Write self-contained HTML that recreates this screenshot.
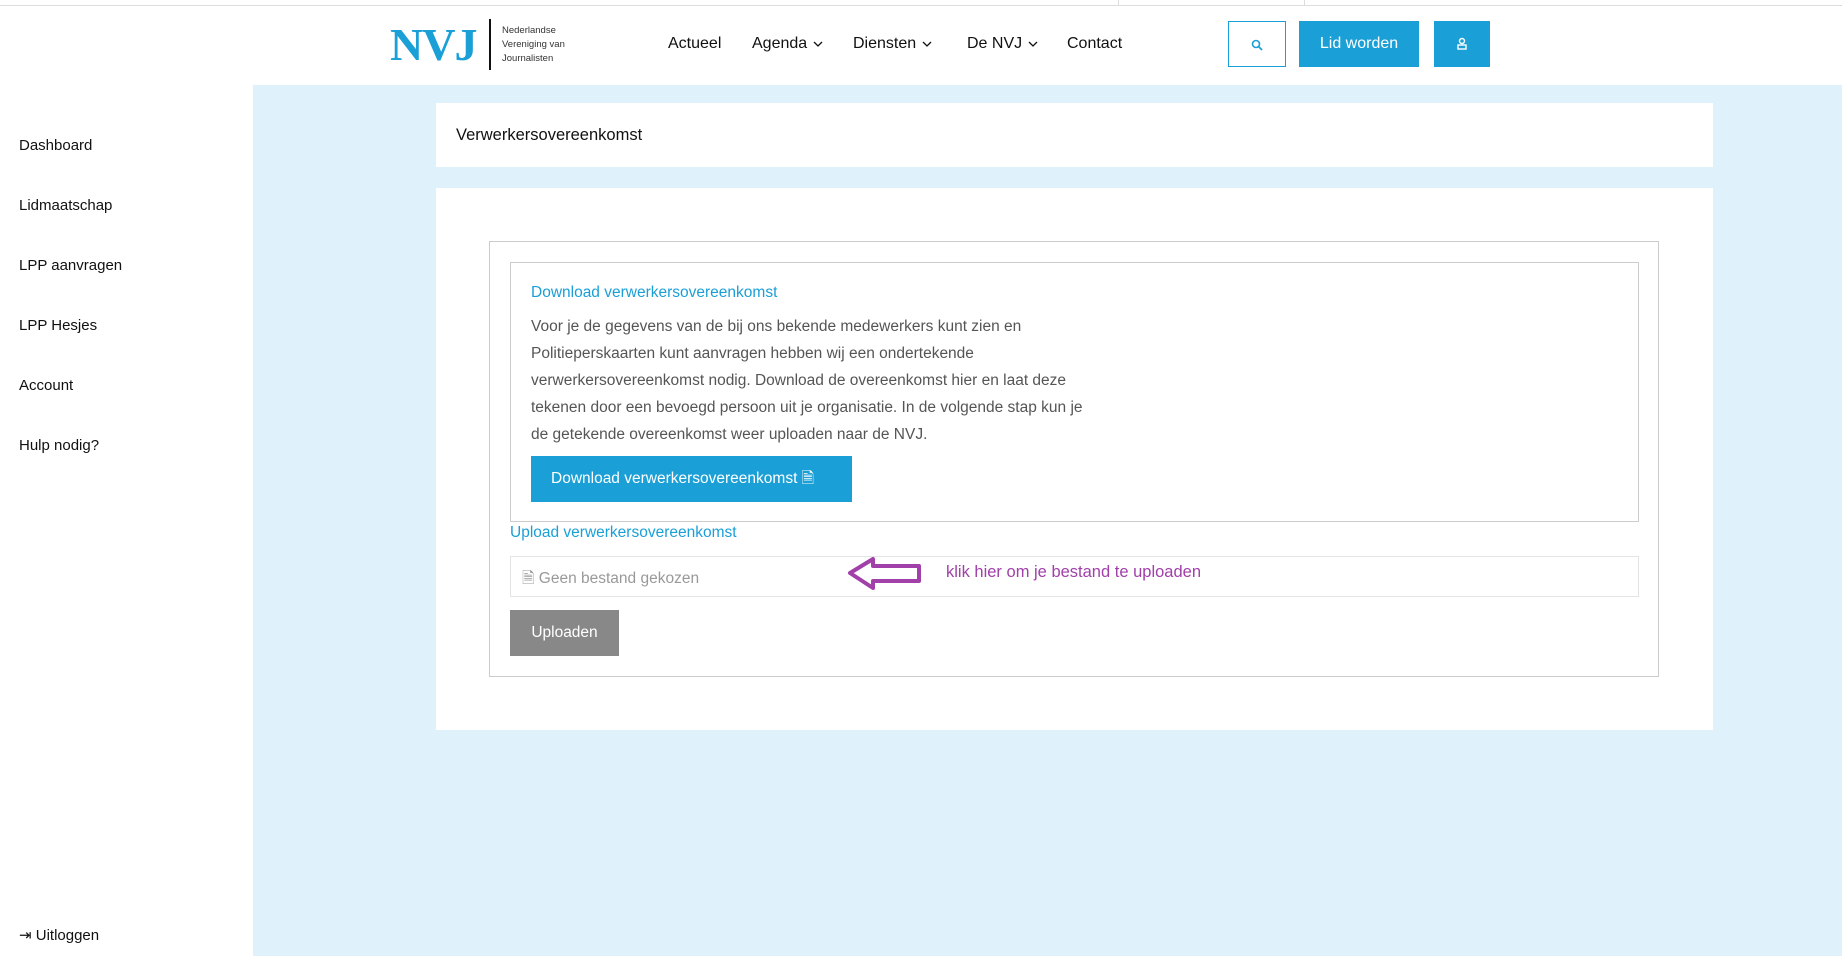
<!DOCTYPE html>
<html><head><meta charset="utf-8"><style>
*{box-sizing:border-box;margin:0;padding:0}
body{width:1842px;height:956px;overflow:hidden;font-family:"Liberation Sans",sans-serif;background:#dff2fb;position:relative;color:#222}
.a{position:absolute}
.hdr{left:0;top:0;width:1842px;height:85px;background:#fff;border-top:6px solid #fff}
.topline{left:0;top:5px;width:1842px;height:1px;background:#ddd}
.nav{top:35px;font-size:16px;color:#111}
.nav svg{margin-left:6px;vertical-align:middle}
.side{left:0;top:85px;width:253px;height:871px;background:#fff}
.si{left:19px;font-size:15px;color:#111}
.card{background:#fff}
p.t{font-size:15.5px;color:#555;line-height:27px;white-space:nowrap}
</style></head><body>
<div class="a hdr"></div>
<div class="a topline"></div>
<div class="a" style="left:1118px;top:0;width:1px;height:5px;background:#ddd"></div>
<div class="a" style="left:1304px;top:0;width:1px;height:5px;background:#ddd"></div>
<div class="a" style="left:390px;top:18px;font-family:'Liberation Serif',serif;font-weight:bold;font-size:46px;color:#1a9fd6;letter-spacing:-1px">NVJ</div>
<div class="a" style="left:489px;top:19px;width:2px;height:51px;background:#111"></div>
<div class="a" style="left:502px;top:24px;font-size:9.5px;line-height:14px;color:#333">Nederlandse<br>Vereniging van<br>Journalisten</div>
<div class="a nav" style="left:668px">Actueel</div>
<div class="a nav" style="left:752px">Agenda<svg width="10" height="6" viewBox="0 0 10 6"><path d="M1 1l4 4 4-4" fill="none" stroke="#111" stroke-width="1.3"/></svg></div>
<div class="a nav" style="left:853px">Diensten<svg width="10" height="6" viewBox="0 0 10 6"><path d="M1 1l4 4 4-4" fill="none" stroke="#111" stroke-width="1.3"/></svg></div>
<div class="a nav" style="left:967px">De NVJ<svg width="10" height="6" viewBox="0 0 10 6"><path d="M1 1l4 4 4-4" fill="none" stroke="#111" stroke-width="1.3"/></svg></div>
<div class="a nav" style="left:1067px">Contact</div>
<div class="a" style="left:1228px;top:21px;width:58px;height:46px;border:1px solid #1a9fd6;background:#fff"></div>
<svg class="a" style="left:1250px;top:38px" width="14" height="14" viewBox="0 0 14 14"><circle cx="6" cy="6" r="3.5" fill="none" stroke="#1a9fd6" stroke-width="1.6"/><path d="M8.5 8.5L12 12" stroke="#1a9fd6" stroke-width="1.8"/></svg>
<div class="a" style="left:1299px;top:21px;width:120px;height:46px;background:#1a9fd6;color:#fff;font-size:16px;text-align:center;line-height:46px">Lid worden</div>
<div class="a" style="left:1434px;top:21px;width:56px;height:46px;background:#1a9fd6"></div>
<svg class="a" style="left:1456px;top:37px" width="12" height="14" viewBox="0 0 12 14"><circle cx="6" cy="4" r="2.5" fill="none" stroke="#fff" stroke-width="1.4"/><rect x="2" y="8" width="8" height="4" fill="none" stroke="#fff" stroke-width="1.4"/></svg>
<div class="a side"></div>
<div class="a si" style="top:137px">Dashboard</div>
<div class="a si" style="top:197px">Lidmaatschap</div>
<div class="a si" style="top:257px">LPP aanvragen</div>
<div class="a si" style="top:317px">LPP Hesjes</div>
<div class="a si" style="top:377px">Account</div>
<div class="a si" style="top:437px">Hulp nodig?</div>
<div class="a si" style="top:926px">⇥ Uitloggen</div>
<div class="a card" style="left:436px;top:103px;width:1277px;height:64px"></div>
<div class="a" style="left:456px;top:126px;font-size:16.5px;color:#111">Verwerkersovereenkomst</div>
<div class="a card" style="left:436px;top:188px;width:1277px;height:542px"></div>
<div class="a" style="left:489px;top:241px;width:1170px;height:436px;border:1px solid #ccc"></div>
<div class="a" style="left:510px;top:262px;width:1129px;height:260px;border:1px solid #ccc"></div>
<div class="a" style="left:531px;top:284px;font-size:15.5px;color:#1a9fd6">Download verwerkersovereenkomst</div>
<p class="a t" style="left:531px;top:313px">Voor je de gegevens van de bij ons bekende medewerkers kunt zien en<br>Politieperskaarten kunt aanvragen hebben wij een ondertekende<br>verwerkersovereenkomst nodig. Download de overeenkomst hier en laat deze<br>tekenen door een bevoegd persoon uit je organisatie. In de volgende stap kun je<br>de getekende overeenkomst weer uploaden naar de NVJ.</p>
<div class="a" style="left:531px;top:456px;width:321px;height:46px;background:#1a9fd6;color:#fff;font-size:15.5px;line-height:46px;padding-left:20px">Download verwerkersovereenkomst 🗎</div>
<div class="a" style="left:510px;top:524px;font-size:15.5px;color:#1a9fd6">Upload verwerkersovereenkomst</div>
<div class="a" style="left:510px;top:556px;width:1129px;height:41px;border:1px solid #e4e4e4;background:#fff"></div>
<div class="a" style="left:522px;top:566px;font-size:15.5px;color:#999">🗎 Geen bestand gekozen</div>
<svg class="a" style="left:847px;top:555px" width="76" height="36" viewBox="0 0 76 36"><path d="M3 18L26 4V11H72V26H26V33Z" fill="none" stroke="#a040a8" stroke-width="4" stroke-linejoin="round"/></svg>
<div class="a" style="left:946px;top:563px;font-size:16.5px;color:#a040a8">klik hier om je bestand te uploaden</div>
<div class="a" style="left:510px;top:610px;width:109px;height:46px;background:#888;color:#fff;font-size:15.5px;line-height:46px;text-align:center">Uploaden</div>
</body></html>
